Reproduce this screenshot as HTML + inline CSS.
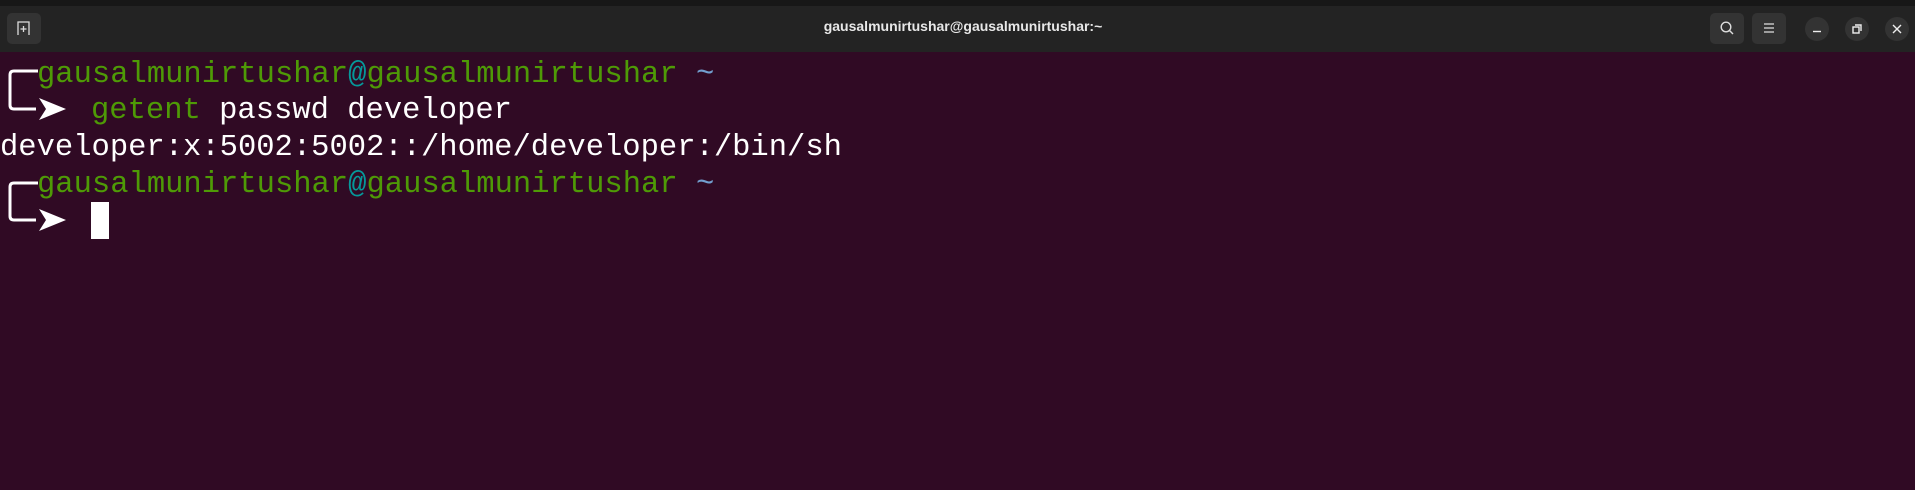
<!DOCTYPE html>
<html><head><style>
html,body{margin:0;padding:0;width:1915px;height:490px;overflow:hidden;background:#300a24;}
.top{position:absolute;left:0;top:0;width:1915px;height:6px;background:#171717;}
.hdr{position:absolute;left:0;top:6px;width:1915px;height:46px;background:#232323;}
.btn{position:absolute;top:13px;width:34px;height:31px;background:#333;border-radius:5px;}
.circ{position:absolute;top:17px;width:24px;height:24px;border-radius:50%;background:#333;}
.title{position:absolute;top:18px;left:0;width:1926px;text-align:center;color:#e8e8e8;font:bold 14px "Liberation Sans",sans-serif;}
.ln{position:absolute;font-family:"Liberation Mono",monospace;font-size:30.5px;white-space:pre;color:#fff;line-height:36px;}
.g{color:#4e9a06}.c{color:#06989a}.b{color:#729fcf}
</style></head><body>
<div class="top"></div>
<div class="hdr"></div>
<div class="btn" style="left:7px"></div>
<svg style="position:absolute;left:16px;top:20px" width="16" height="16" viewBox="0 0 16 16" fill="none" stroke="#ddd" stroke-width="1.3"><path d="M2 15V2h11v13"/><path d="M7.5 6v6M4.5 9h6"/></svg>
<div class="title">gausalmunirtushar@gausalmunirtushar:~</div>
<div class="btn" style="left:1710px"></div>
<svg style="position:absolute;left:1719px;top:20px" width="16" height="16" viewBox="0 0 16 16" fill="none" stroke="#ddd" stroke-width="1.4"><circle cx="7" cy="7" r="4.8"/><path d="M10.5 10.5l3.5 3.5"/></svg>
<div class="btn" style="left:1752px"></div>
<svg style="position:absolute;left:1761px;top:21px" width="16" height="14" viewBox="0 0 16 14" stroke="#ddd" stroke-width="1.3"><path d="M3 3h10M3 7h10M3 11h10"/></svg>
<div class="circ" style="left:1805px"></div>
<div class="circ" style="left:1845px"></div>
<div class="circ" style="left:1885px"></div>
<svg style="position:absolute;left:1805px;top:17px" width="104" height="24" viewBox="0 0 104 24" fill="none" stroke="#eee" stroke-width="1.4">
<path d="M8 14.5h8"/>
<rect x="48" y="10" width="6" height="6"/><path d="M50 8h6v6"/>
<path d="M88 8l8 8M96 8l-8 8"/>
</svg>
<!-- brackets -->
<svg style="position:absolute;left:0;top:60px" width="80" height="180" viewBox="0 60 80 180" fill="none" stroke="#fff" stroke-width="3">
<path d="M38 71H14q-4 0-4 4v30q0 4 4 4h22"/>
<path d="M38 183H14q-4 0-4 4v29q0 4 4 4h22"/>
<path d="M39 98l27 11l-27 11l7-11z" fill="#fff" stroke="none"/>
<path d="M39 209l27 11l-27 11l7-11z" fill="#fff" stroke="none"/>
</svg>
<div class="ln" style="left:37px;top:57px"><span class="g">gausalmunirtushar</span><span class="c">@</span><span class="g">gausalmunirtushar</span> <span class="b">~</span></div>
<div class="ln" style="left:91px;top:93px"><span class="g">getent</span> passwd developer</div>
<div class="ln" style="left:0;top:130px">developer:x:5002:5002::/home/developer:/bin/sh</div>
<div class="ln" style="left:37px;top:167px"><span class="g">gausalmunirtushar</span><span class="c">@</span><span class="g">gausalmunirtushar</span> <span class="b">~</span></div>
<div style="position:absolute;left:91px;top:202px;width:18px;height:37px;background:#fff"></div>
</body></html>
